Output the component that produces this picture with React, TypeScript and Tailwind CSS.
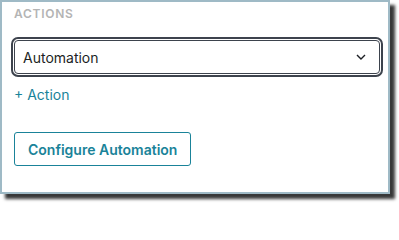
export default function App() {
  return (
    <div className="h-[204px] w-[399px] bg-white pr-[9px] pb-[10px]" style={{ fontFamily: "Inter, 'Liberation Sans', sans-serif" }}>
      <div className="h-[194px] w-[390px] border-2 border-[#9fbac6] bg-white shadow-[5px_5px_3px_rgba(0,0,0,0.78)]">
        <div className="px-[12px] pt-[4px]">
          <div className="text-[12px] font-semibold leading-[16px] tracking-[0.06em] text-[#b4b4b4]">ACTIONS</div>
          <div className="mt-[18px] flex h-[34px] w-[366px] items-center justify-between rounded-[4px] border border-[#3d434d] pl-[8px] pr-[13px] outline-2 outline-offset-1 outline-[#3d434d]">
            <span className="text-[14px] text-[#1c1f24]">Automation</span>
            <svg width="10" height="6" viewBox="0 0 10 6">
              <path d="M1 1l4 4 4-4" fill="none" stroke="#1c1f24" strokeWidth="1.4" />
            </svg>
          </div>
          <div className="mt-[12px] text-[14px] leading-[18px] text-[#1a8399]">+ Action</div>
          <button className="mt-[28px] h-[34px] rounded-[3px] border border-[#1a8399] px-[13px] text-[14px] font-semibold text-[#1a8399]">
            Configure Automation
          </button>
        </div>
      </div>
    </div>
  );
}
